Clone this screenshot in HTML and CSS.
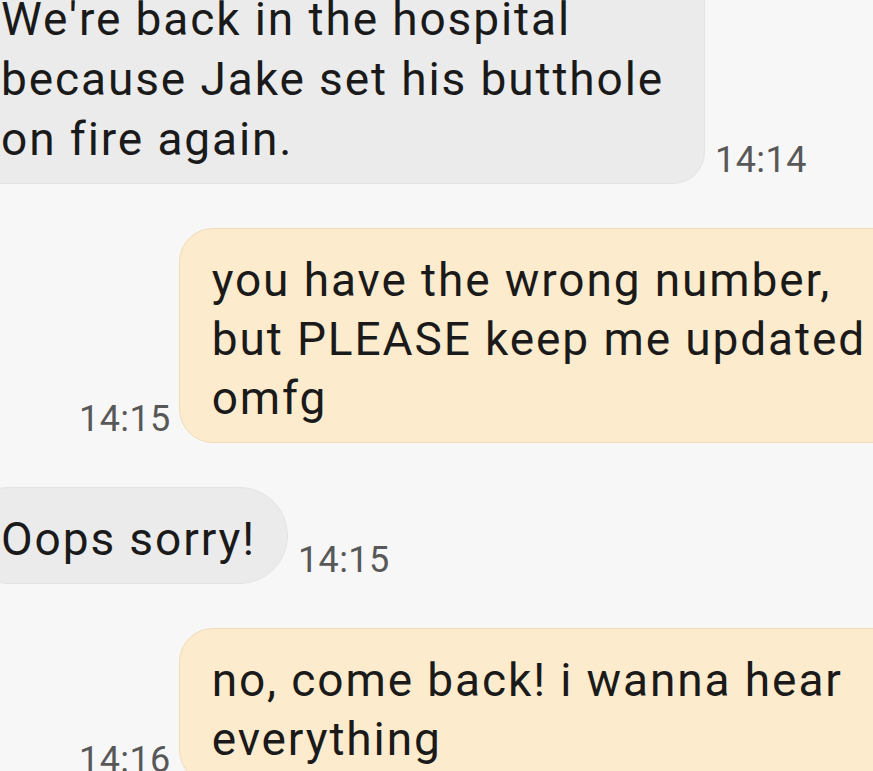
FILE: index.html
```html
<!DOCTYPE html>
<html>
<head>
<meta charset="utf-8">
<link rel="stylesheet" href="styles.css">
</head>
<body>
<div class="chat">
  <div class="row in first">
    <div class="bubble recv big">We're back in the hospital<br>because Jake set his butthole<br>on fire again.</div>
    <div class="time">14:14</div>
  </div>
  <div class="row out">
    <div class="time">14:15</div>
    <div class="bubble sent">you have the wrong number,<br>but PLEASE keep me updated<br>omfg</div>
  </div>
  <div class="row in">
    <div class="bubble recv pill">Oops sorry!</div>
    <div class="time">14:15</div>
  </div>
  <div class="row out">
    <div class="time">14:16</div>
    <div class="bubble sent">no, come back! i wanna hear<br>everything</div>
  </div>
</div>
</body>
</html>
```
FILE: styles.css
```css
html, body {
  margin: 0;
  padding: 0;
  background: #f7f7f7;
  overflow: hidden;
  width: 873px;
  height: 771px;
}
.chat {
  display: flex;
  flex-direction: column;
  gap: 44px;
  margin-top: -34px;
  font-family: Roboto, "Noto Sans", sans-serif;
  width: 1300px;
}
.row {
  display: flex;
  align-items: flex-end;
  gap: 10px;
}
.row.out {
  padding-left: 79px;
  gap: 8px;
}
.bubble {
  font-size: 46px;
  line-height: 59px;
  color: #1a1a1a;
  padding: 22px 40px 14px 32px;
  white-space: nowrap;
  letter-spacing: 1.9px;
}
.bubble.big { line-height: 60px; }
.recv {
  background: #ebebeb;
  border: 1px solid #e3e3e3;
  border-radius: 32px;
  margin-left: -40px;
  padding-left: 40px;
}
.recv.pill {
  border-radius: 50px;
  padding-right: 31px;
}
.sent {
  background: #fdebcd;
  border: 1px solid #f1dcb8;
  border-radius: 34px;
  padding-right: 80px;
}
.time {
  font-size: 36px;
  line-height: 1;
  color: #585858;
  margin-bottom: 6px;
  letter-spacing: 0.4px;
}
```
